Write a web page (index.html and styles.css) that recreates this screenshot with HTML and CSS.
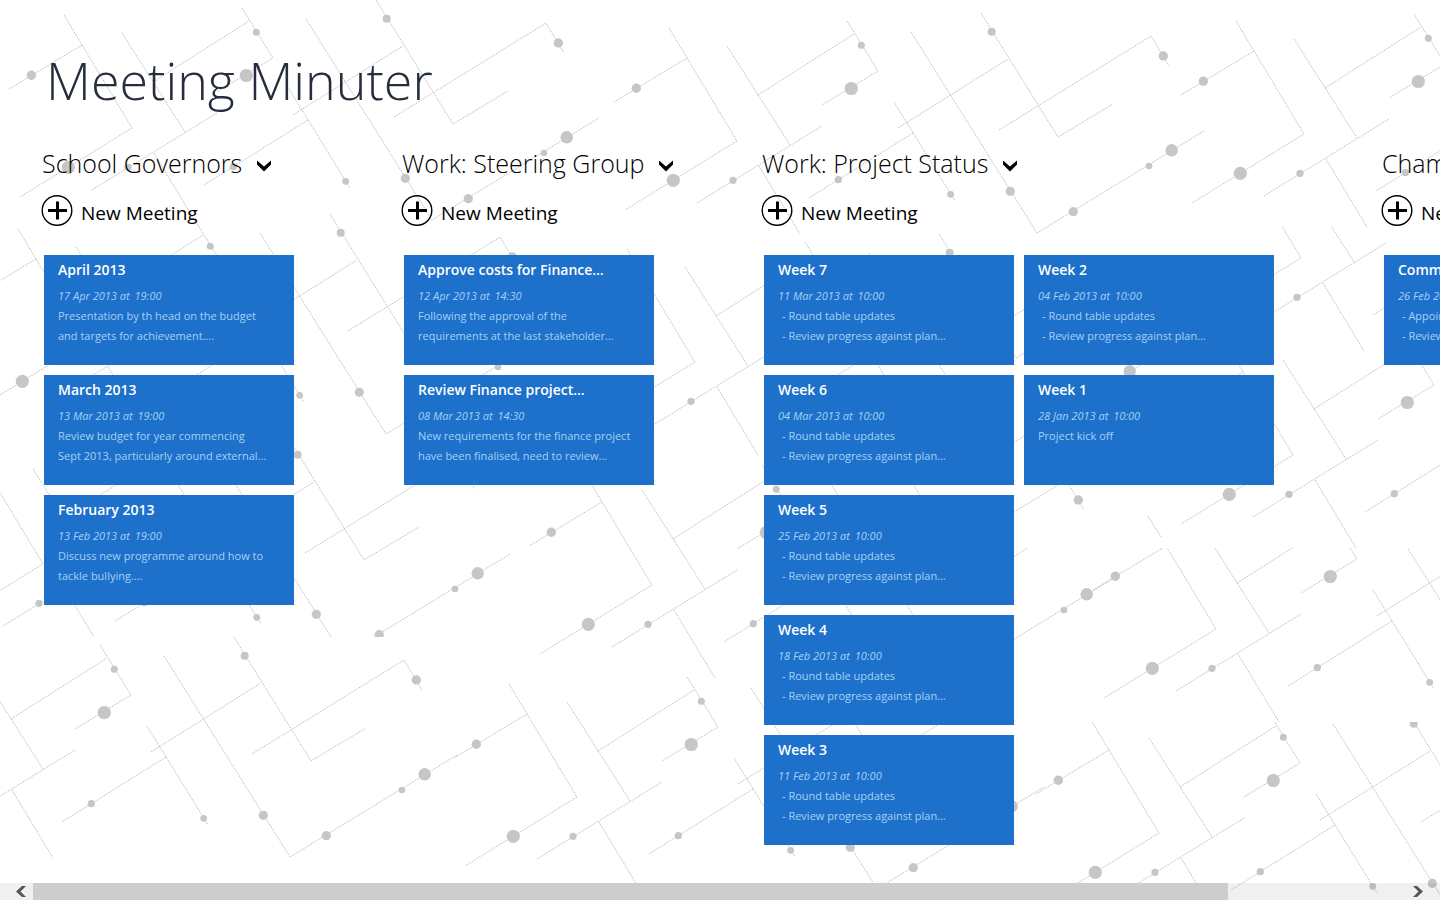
FILE: index.html
```
<!DOCTYPE html>
<html lang="en">
<head>
<meta charset="utf-8">
<title>Meeting Minuter</title>
<link rel="stylesheet" href="styles.css">
</head>
<body>
<svg class="backdrop" aria-hidden="true">
  <defs>
    <g id="circuit">
      <g class="trace">
        <path d="M669 28L737 141L625 210M687 58L614 102M727 46L790 145M758 95L854 34M847 21L878 71L822 105M697 203L822 126M759 166L800 234"/>
        <path d="M894 102L955 201M913 133L809 198M898 128L1008 59M911 32L1037 233L1204 131M981 13L1058 137L1113 104M999 130L1151 36L1169 66"/>
      </g>
      <g class="node">
        <circle cx="636.3" cy="88.3" r="4.7"/><circle cx="673.3" cy="180.3" r="6.6"/><circle cx="733" cy="180.3" r="3.6"/>
        <circle cx="851.3" cy="88.5" r="6.6"/><circle cx="861.3" cy="45.3" r="3.5"/><circle cx="838.3" cy="179.7" r="3.6"/>
        <circle cx="950.7" cy="194.3" r="3.4"/><circle cx="991.7" cy="31.7" r="4"/><circle cx="1010.3" cy="191.3" r="4.6"/>
        <circle cx="1073.3" cy="211.7" r="4.6"/><circle cx="1149" cy="166" r="3.3"/><circle cx="1171.7" cy="150.3" r="6.2"/>
        <circle cx="1163.3" cy="56" r="4.7"/>
      </g>
    </g>
    <clipPath id="band-a"><rect y="227" width="3000" height="400"/></clipPath>
    <clipPath id="band-b"><rect width="3000" height="548"/></clipPath>
    <clipPath id="band-c"><rect y="548" width="3000" height="174"/></clipPath>
    <clipPath id="band-d"><rect width="3000" height="637"/></clipPath>
    <clipPath id="band-e"><rect y="722" width="3000" height="600"/></clipPath>
  </defs>
  <use href="#circuit"/>
  <use href="#circuit" x="567" y="-7"/>
  <use href="#circuit" x="-605" y="-13"/>
  <use href="#circuit" x="-651" y="201"/>
  <use href="#circuit" x="-42" y="221"/>
  <g clip-path="url(#band-a)"><use href="#circuit" x="564" y="117"/></g>
  <g clip-path="url(#band-b)"><use href="#circuit" x="556" y="314"/></g>
  <g clip-path="url(#band-d)"><use href="#circuit" x="-694" y="423"/></g>
  <use href="#circuit" x="-85" y="444"/>
  <path class="trace" d="M1148 516L1161 537"/>
  <g clip-path="url(#band-c)"><use href="#circuit" x="479" y="488"/></g>
  <use href="#circuit" x="-747" y="624"/>
  <use href="#circuit" x="-160" y="656"/>
  <g clip-path="url(#band-e)"><use href="#circuit" x="422" y="692"/></g>
  <symbol id="plus" viewBox="0 0 32 32"><circle cx="16" cy="16" r="14.8" fill="none" stroke="currentColor" stroke-width="1.4"/><path d="M7 16H26M16.500 7V25" fill="none" stroke="currentColor" stroke-width="3"/></symbol>
  <symbol id="chevron" viewBox="0 0 14 12"><path d="M0 .5L7 6.500L14 .5V4.500L7 11.500L0 4.500Z" fill="currentColor"/></symbol>
</svg>

<div class="page">
  <header class="page-header"><h1>Meeting Minuter</h1></header>
  <main class="groups">
    <section class="group">
      <h2><button class="group-title" type="button">School Governors<svg class="chevron"><use href="#chevron"/></svg></button></h2>
      <button class="new" type="button"><svg class="plus"><use href="#plus"/></svg><span>New Meeting</span></button>
      <div class="cards">
        <a class="card" href="#"><strong>April 2013</strong><em>17 Apr 2013 at <time>19:00</time></em><span>Presentation by th head on the budget</span><span>and targets for achievement….</span></a>
        <a class="card" href="#"><strong>March 2013</strong><em>13 Mar 2013 at <time>19:00</time></em><span>Review budget for year commencing</span><span>Sept 2013, particularly around external…</span></a>
        <a class="card" href="#"><strong>February 2013</strong><em>13 Feb 2013 at <time>19:00</time></em><span>Discuss new programme around how to</span><span>tackle bullying….</span></a>
      </div>
    </section>
    <section class="group">
      <h2><button class="group-title" type="button">Work: Steering Group<svg class="chevron"><use href="#chevron"/></svg></button></h2>
      <button class="new" type="button"><svg class="plus"><use href="#plus"/></svg><span>New Meeting</span></button>
      <div class="cards">
        <a class="card" href="#"><strong>Approve costs for Finance…</strong><em>12 Apr 2013 at <time>14:30</time></em><span>Following the approval of the</span><span>requirements at the last stakeholder…</span></a>
        <a class="card" href="#"><strong>Review Finance project…</strong><em>08 Mar 2013 at <time>14:30</time></em><span>New requirements for the finance project</span><span>have been finalised, need to review…</span></a>
      </div>
    </section>
    <section class="group">
      <h2><button class="group-title" type="button">Work: Project Status<svg class="chevron"><use href="#chevron"/></svg></button></h2>
      <button class="new" type="button"><svg class="plus"><use href="#plus"/></svg><span>New Meeting</span></button>
      <div class="cards">
        <a class="card" href="#"><strong>Week 7</strong><em>11 Mar 2013 at <time>10:00</time></em><span class="item">- Round table updates</span><span class="item">- Review progress against plan…</span></a>
        <a class="card" href="#"><strong>Week 6</strong><em>04 Mar 2013 at <time>10:00</time></em><span class="item">- Round table updates</span><span class="item">- Review progress against plan…</span></a>
        <a class="card" href="#"><strong>Week 5</strong><em>25 Feb 2013 at <time>10:00</time></em><span class="item">- Round table updates</span><span class="item">- Review progress against plan…</span></a>
        <a class="card" href="#"><strong>Week 4</strong><em>18 Feb 2013 at <time>10:00</time></em><span class="item">- Round table updates</span><span class="item">- Review progress against plan…</span></a>
        <a class="card" href="#"><strong>Week 3</strong><em>11 Feb 2013 at <time>10:00</time></em><span class="item">- Round table updates</span><span class="item">- Review progress against plan…</span></a>
        <a class="card" href="#"><strong>Week 2</strong><em>04 Feb 2013 at <time>10:00</time></em><span class="item">- Round table updates</span><span class="item">- Review progress against plan…</span></a>
        <a class="card" href="#"><strong>Week 1</strong><em>28 Jan 2013 at <time>10:00</time></em><span>Project kick off</span></a>
      </div>
    </section>
    <section class="group">
      <h2><button class="group-title" type="button">Champions</button></h2>
      <button class="new" type="button"><svg class="plus"><use href="#plus"/></svg><span>New Meeting</span></button>
      <div class="cards">
        <a class="card" href="#"><strong>Committee</strong><em>26 Feb 2013</em><span class="item">- Appoint</span><span class="item">- Review</span></a>
      </div>
    </section>
  </main>
  <footer class="scrollbar">
    <button class="arrow" type="button" aria-label="Scroll left"><svg width="10" height="11" viewBox="0 0 10 11"><path d="M6 0H10L4.500 5.500L10 11H6L0 5.500Z" fill="#555"/></svg></button>
    <div class="track"><div class="thumb"></div></div>
    <button class="arrow arrow-right" type="button" aria-label="Scroll right"><svg width="10" height="11" viewBox="0 0 10 11"><path d="M4 0H0L5.500 5.500L0 11H4L10 5.500Z" fill="#555"/></svg></button>
  </footer>
</div>
</body>
</html>
```

FILE: styles.css
```
* { box-sizing: border-box; }

body {
  margin: 0;
  height: 100vh;
  overflow: hidden;
  background: #fff;
  color: #000;
  font-family: "Open Sans", "Noto Sans", sans-serif;
}

h1, h2 { margin: 0; font-weight: 300; }

/* Headings never widen a group beyond its cards. */
h2 { contain: inline-size; }

button {
  margin: 0;
  padding: 0;
  border: 0;
  background: none;
  color: inherit;
  font: inherit;
}

.backdrop {
  position: absolute;
  inset: 0;
  width: 100%;
  height: 100%;
}

.trace { fill: none; stroke: #b4b4b4; stroke-width: 1; stroke-dasharray: 1 1; }
.node { fill: #c6c6c6; }

.page {
  position: relative;
  height: 100%;
  display: flex;
  flex-direction: column;
}

.page-header { padding: 45px 46px 30px; }

h1 {
  color: #262e3e;
  font-size: 52px;
  line-height: 70px;
}

.groups {
  flex: 1;
  min-height: 0;
  display: flex;
  gap: 110px;
  padding-left: 44px;
  overflow: hidden;
}

.group { flex: none; }

.group-title {
  display: flex;
  align-items: center;
  gap: 15px;
  margin-left: -2px;
  font-size: 25px;
  line-height: 36px;
  white-space: nowrap;
}

.chevron { width: 14px; height: 12px; margin-top: 6px; }

.new {
  display: flex;
  align-items: center;
  gap: 8px;
  margin: 13px 0 28px -3px;
  font-size: 19px;
  line-height: 33px;
  white-space: nowrap;
}

.new span {
  align-self: flex-end;
  line-height: 28px;
}

.plus { width: 32px; height: 33px; }

.cards {
  display: grid;
  grid-template-rows: repeat(5, auto);
  grid-auto-flow: column;
  grid-auto-columns: 250px;
  gap: 10px;
}

.card {
  display: flex;
  flex-direction: column;
  min-height: 110px;
  padding: 5px 14px;
  background: #1d71cb;
  color: #a5d0f5;
  font-size: 11px;
  line-height: 20px;
  text-decoration: none;
  white-space: nowrap;
}

.card strong {
  margin-bottom: 6px;
  color: #fff;
  font-size: 14px;
  font-weight: 600;
}

.card time { padding-left: 2px; }
.card .item { padding-left: 4px; }

.scrollbar {
  display: flex;
  height: 17px;
  background: rgba(0, 0, 0, 0.06);
}

.arrow {
  display: flex;
  align-items: center;
  justify-content: flex-end;
  width: 33px;
  padding-right: 7px;
}

.arrow-right { justify-content: flex-start; padding: 0 0 0 6px; }
.track { flex: 1; }
.thumb { width: 87%; height: 100%; background: #cdcdcd; }
```
